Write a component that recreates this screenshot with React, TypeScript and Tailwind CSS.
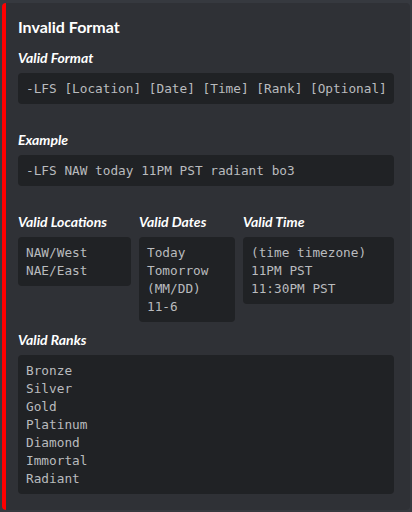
import React from "react";

const mono = { fontFamily: '"DejaVu Sans Mono", monospace' };

function Code({ lines, className = "" }: { lines: string[]; className?: string }) {
  return (
    <div
      className={`bg-[#202225] rounded-[4px] pt-[7px] pb-[6px] px-[8px] text-[12.75px] leading-[18px] text-[#b9bbbe] whitespace-pre ${className}`}
      style={mono}
    >
      {lines.map((l, i) => (
        <div key={i}>{l}</div>
      ))}
    </div>
  );
}

function Name({ children }: { children: React.ReactNode }) {
  return (
    <div className="text-[14px] leading-[18px] font-bold italic text-white">{children}</div>
  );
}

export default function App() {
  return (
    <div
      className="w-[412px] h-[512px] bg-[#36393f] pt-[3px] pl-[2px] pr-[2px] overflow-hidden"
      style={{ fontFamily: 'Lato, "Noto Sans", sans-serif' }}
    >
      <div className="h-[507px] bg-[#2f3136] border-l-4 border-[#ff0000] rounded-[4px] pl-[12px] pr-[16px] pt-[13px] pb-[16px] flex flex-col">
        <div className="text-[16px] leading-[22px] font-bold text-white">Invalid Format</div>

        <div className="mt-[11px]">
          <Name>Valid Format</Name>
          <Code className="mt-[6px]" lines={["-LFS [Location] [Date] [Time] [Rank] [Optional]"]} />
        </div>

        <div className="mt-[27px]">
          <Name>Example</Name>
          <Code className="mt-[6px]" lines={["-LFS NAW today 11PM PST radiant bo3"]} />
        </div>

        <div className="mt-[27px] flex gap-[8px] items-start">
          <div className="w-[113px]">
            <Name>Valid Locations</Name>
            <Code className="mt-[6px]" lines={["NAW/West", "NAE/East"]} />
          </div>
          <div className="w-[96px]">
            <Name>Valid Dates</Name>
            <Code className="mt-[6px]" lines={["Today", "Tomorrow", "(MM/DD)", "11-6"]} />
          </div>
          <div className="flex-1">
            <Name>Valid Time</Name>
            <Code className="mt-[6px]" lines={["(time timezone)", "11PM PST", "11:30PM PST"]} />
          </div>
        </div>

        <div className="mt-[9px]">
          <Name>Valid Ranks</Name>
          <Code
            className="mt-[6px]"
            lines={["Bronze", "Silver", "Gold", "Platinum", "Diamond", "Immortal", "Radiant"]}
          />
        </div>
      </div>
    </div>
  );
}
